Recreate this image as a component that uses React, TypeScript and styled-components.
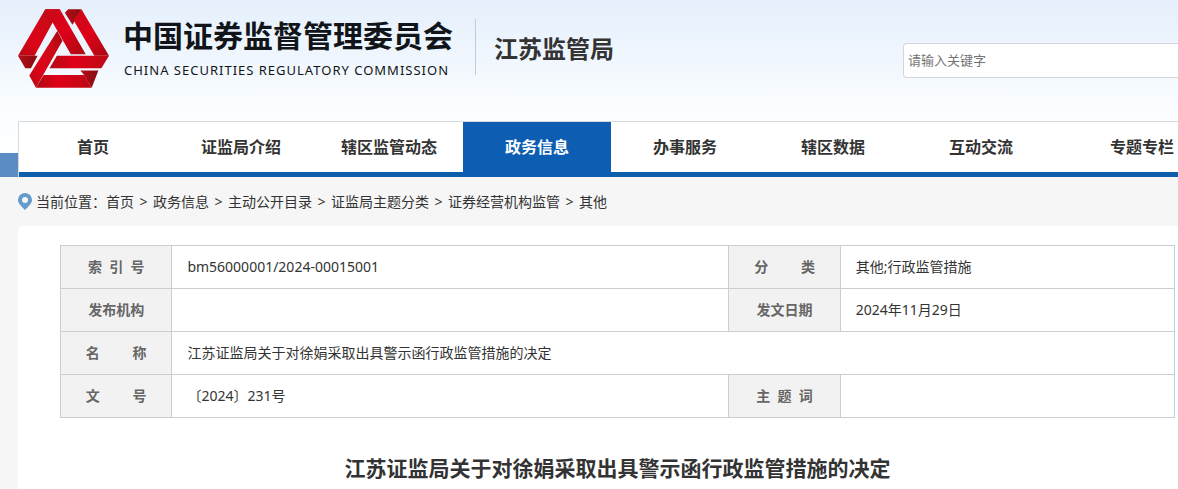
import React from "react";
import styled, { createGlobalStyle } from "styled-components";

const GlobalStyle = createGlobalStyle`
  * { box-sizing: border-box; }
  body {
    margin: 0;
    background: #f6f6f6;
    color: #333;
    font: 14px/20px "Noto Sans", "Noto Sans CJK SC", sans-serif;
    overflow-x: hidden;
  }
`;

const Header = styled.header`
  padding-left: 18px;
  background:
    linear-gradient(#5b8dc4, #5b8dc4) bottom / 100% 24px no-repeat,
    linear-gradient(#e5f0fc, #eef5fd 50px, #fafdff 105px, #fff);
`;

const Masthead = styled.div`
  display: flex;
  align-items: flex-start;
  height: 121px;
`;

const Brand = styled.a`
  display: flex;
  color: #111519;
  text-decoration: none;
`;

const Emblem = styled.svg`
  flex: none;
  width: 91px;
  height: 79px;
  margin-top: 9px;
`;

const BrandText = styled.div`
  margin: 14px 0 0 14px;
  white-space: nowrap;
`;

const BrandName = styled.div`
  font-size: 30px;
  line-height: 44px;
  font-weight: 700;
`;

const BrandLatin = styled.div`
  padding-left: 1px;
  font-size: 13px;
  line-height: 24px;
  letter-spacing: 1px;
`;

const Bureau = styled.div`
  flex: none;
  height: 56px;
  margin: 19px 0 0 22px;
  padding-left: 18px;
  border-left: 1px solid #c3ccd6;
  font-size: 24px;
  line-height: 60px;
  font-weight: 700;
`;

const Search = styled.input`
  width: 275px;
  height: 35px;
  margin: 43px 0 0 auto;
  padding: 0 4px 2px;
  border: 1px solid #d3d6d9;
  border-right: 0;
  border-radius: 4px 0 0 4px;
  background: #fff;
  font: inherit;
  font-size: 13px;
  outline: none;
  &::placeholder { color: #757575; opacity: 1; }
`;

const Nav = styled.nav`
  display: flex;
  overflow: hidden;
  background: #fff;
  border: solid #d5dade;
  border-width: 1px 0 0 1px;
  box-shadow: inset 0 -5px #0d5eab;
`;

const NavItem = styled.a<{ $active?: boolean; $wide?: boolean }>`
  flex: none;
  width: ${(p) => (p.$wide ? 174 : 148)}px;
  height: 55px;
  font-size: 16px;
  line-height: 50px;
  font-weight: 700;
  text-align: center;
  text-decoration: none;
  color: ${(p) => (p.$active ? "#fff" : "#333")};
  background: ${(p) => (p.$active ? "#0d5eb3" : "transparent")};
`;

const Crumbs = styled.nav`
  display: flex;
  align-items: center;
  height: 49px;
  padding-left: 18px;
  white-space: nowrap;
`;

const Pin = styled.svg`
  width: 14px;
  height: 17px;
  margin-right: 4px;
`;

const CrumbLink = styled.a`
  color: inherit;
  text-decoration: none;
`;

const Separator = styled.span`
  width: 19px;
  text-align: center;
`;

const Article = styled.main`
  margin-left: 18px;
  padding: 19px 3px 24px 42px;
  min-height: 263px;
  background: #fff;
  border-top-left-radius: 5px;
`;

const Info = styled.table`
  width: 100%;
  table-layout: fixed;
  border-collapse: collapse;
`;

const Label = styled.th`
  height: 43px;
  padding: 0;
  border: 1px solid #caced3;
  background: #f2f2f2;
  color: #666;
  font-weight: 700;
`;

const Value = styled.td`
  padding: 0 15px;
  border: 1px solid #caced3;
`;

const Title = styled.h1`
  margin: 34px 0 0;
  font-size: 21px;
  line-height: 32px;
  font-weight: 700;
  text-align: center;
`;

const navItems = ["首页", "证监局介绍", "辖区监管动态", "政务信息", "办事服务", "辖区数据", "互动交流", "专题专栏"];
const crumbs = ["首页", "政务信息", "主动公开目录", "证监局主题分类", "证券经营机构监管", "其他"];

const spread = (chars: string, spaces: number) => chars.split("").join("\u00a0".repeat(spaces));

function Logo() {
  return (
    <Emblem viewBox="54 27 274 237" aria-hidden="true">
      <defs>
        <linearGradient id="fall" x1="0" y1="1" x2="1" y2="0">
          <stop offset="0" stopColor="#b80a14" />
          <stop offset=".35" stopColor="#dc0418" />
          <stop offset=".7" stopColor="#cc0a17" />
          <stop offset="1" stopColor="#9e0b12" />
        </linearGradient>
        <linearGradient id="rise" x1="0" y1="0" x2="1" y2="1">
          <stop offset="0" stopColor="#c90b18" />
          <stop offset=".5" stopColor="#de0018" />
          <stop offset="1" stopColor="#a70a12" />
        </linearGradient>
        <linearGradient id="level" x1="0" y1="0" x2="1" y2="0">
          <stop offset="0" stopColor="#b00b13" />
          <stop offset=".4" stopColor="#df0018" />
          <stop offset="1" stopColor="#bd0a16" />
        </linearGradient>
        <linearGradient id="fold" x1="0" y1="0" x2="1" y2="0">
          <stop offset="0" stopColor="#b80c17" />
          <stop offset="1" stopColor="#860b10" />
        </linearGradient>
      </defs>
      <path fill="url(#fall)" d="M136 27h44l-76 140H54z" />
      <path fill="url(#rise)" d="M136 27h44l78 136h-45l-53-93z" />
      <path fill="url(#fold)" d="M205 27h40l-27 47-23-36z" />
      <path fill="url(#rise)" d="M245 27l83 140h-44l-63-107z" />
      <path fill="url(#fold)" d="M54 167h59l-20 38H76z" />
      <path fill="url(#fall)" d="M172 93l16 29-80 142-20-37z" />
      <path fill="url(#level)" d="M171 167h157l-23 38H149z" />
      <path fill="url(#level)" d="M131 225h123l22 39H108z" />
      <path fill="url(#fold)" d="M242 212h54l-20 52-23-39z" />
    </Emblem>
  );
}

export default function App() {
  return (
    <>
      <GlobalStyle />
      <Header>
        <Masthead>
          <Brand href="#">
            <Logo />
            <BrandText>
              <BrandName>中国证券监督管理委员会</BrandName>
              <BrandLatin>CHINA SECURITIES REGULATORY COMMISSION</BrandLatin>
            </BrandText>
          </Brand>
          <Bureau>江苏监管局</Bureau>
          <Search type="search" aria-label="请输入关键字" placeholder="请输入关键字" />
        </Masthead>
        <Nav>
          {navItems.map((item, i) => (
            <NavItem key={item} href="#" $active={i === 3} $wide={i === 7}>{item}</NavItem>
          ))}
        </Nav>
      </Header>
      <Crumbs>
        <Pin viewBox="0 0 14 17" aria-hidden="true">
          <path fill="#659bcc" fillRule="evenodd" d="M7 0a7 7 0 0 1 7 7c0 3-3 6-7 10C3 13 0 10 0 7a7 7 0 0 1 7-7zm0 4a3 3 0 1 0 0 6 3 3 0 0 0 0-6z" />
        </Pin>
        <span>当前位置：</span>
        {crumbs.map((item, i) => (
          <React.Fragment key={item}>
            {i > 0 && <Separator>&gt;</Separator>}
            <CrumbLink href="#">{item}</CrumbLink>
          </React.Fragment>
        ))}
      </Crumbs>
      <Article>
        <Info>
          <colgroup>
            <col style={{ width: "10%" }} />
            <col style={{ width: "50%" }} />
            <col style={{ width: "10%" }} />
            <col style={{ width: "30%" }} />
          </colgroup>
          <tbody>
            <tr>
              <Label scope="row">{spread("索引号", 2)}</Label>
              <Value>bm56000001/2024-00015001</Value>
              <Label scope="row">{spread("分类", 9)}</Label>
              <Value>其他;行政监管措施</Value>
            </tr>
            <tr>
              <Label scope="row">发布机构</Label>
              <Value />
              <Label scope="row">发文日期</Label>
              <Value>2024年11月29日</Value>
            </tr>
            <tr>
              <Label scope="row">{spread("名称", 9)}</Label>
              <Value colSpan={3}>江苏证监局关于对徐娟采取出具警示函行政监管措施的决定</Value>
            </tr>
            <tr>
              <Label scope="row">{spread("文号", 9)}</Label>
              <Value>〔2024〕231号</Value>
              <Label scope="row">{spread("主题词", 2)}</Label>
              <Value />
            </tr>
          </tbody>
        </Info>
        <Title>江苏证监局关于对徐娟采取出具警示函行政监管措施的决定</Title>
      </Article>
    </>
  );
}
